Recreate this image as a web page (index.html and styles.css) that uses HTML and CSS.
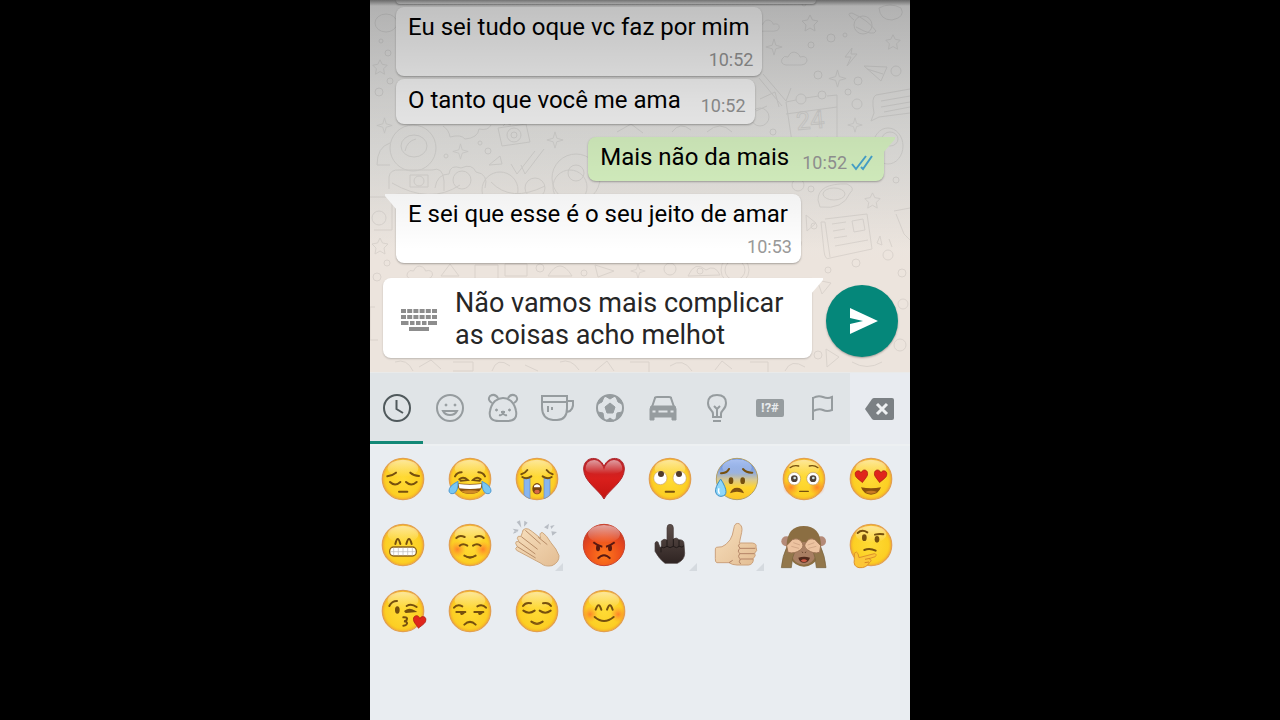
FILE: index.html
```html
<!DOCTYPE html>
<html lang="pt-BR">
<head>
<meta charset="utf-8">
<meta name="viewport" content="width=device-width, initial-scale=1">
<title>Conversa</title>
<link rel="stylesheet" href="styles.css">
</head>
<body>
<svg class="defs" width="0" height="0" aria-hidden="true">
  <defs>
    <radialGradient id="gold" cx="50%" cy="50%" r="54%">
      <stop offset="0" stop-color="#ffdb35"/><stop offset=".78" stop-color="#fccf24"/><stop offset="1" stop-color="#f0a12b"/>
    </radialGradient>
    <linearGradient id="shine" x1="0" y1="0" x2="0" y2="1">
      <stop offset="0" stop-color="#fff" stop-opacity=".55"/><stop offset="1" stop-color="#fff" stop-opacity="0"/>
    </linearGradient>
    <linearGradient id="red" x1="0" y1="0" x2="0" y2="1">
      <stop offset="0" stop-color="#b8262c"/><stop offset=".5" stop-color="#d91f1c"/><stop offset="1" stop-color="#c31410"/>
    </linearGradient>
    <radialGradient id="anger" cx="50%" cy="75%" r="75%">
      <stop offset="0" stop-color="#ff7a1c"/><stop offset=".6" stop-color="#ea4a1c"/><stop offset="1" stop-color="#c0352a"/>
    </radialGradient>
    <linearGradient id="cold" x1="0" y1="0" x2="0" y2="1">
      <stop offset="0" stop-color="#3f74e0"/><stop offset=".35" stop-color="#92acdc"/><stop offset=".52" stop-color="#d8c890"/><stop offset=".7" stop-color="#ffd530"/><stop offset="1" stop-color="#fcc425"/>
    </linearGradient>
    <radialGradient id="blush"><stop offset="0" stop-color="#ff6a2a" stop-opacity=".75"/><stop offset="1" stop-color="#ff8a2a" stop-opacity="0"/></radialGradient>
    <linearGradient id="skin" x1="0" y1="0" x2="1" y2="1">
      <stop offset="0" stop-color="#f7dfbd"/><stop offset="1" stop-color="#e3bd93"/>
    </linearGradient>
    <linearGradient id="dark" x1="0" y1="0" x2="0" y2="1">
      <stop offset="0" stop-color="#5d4f4b"/><stop offset="1" stop-color="#2f2422"/>
    </linearGradient>
    <symbol id="face" viewBox="0 0 132 132">
      <circle cx="66" cy="66" r="62" fill="url(#gold)" stroke="#e2a050" stroke-width="4"/>
      <ellipse cx="66" cy="34" rx="46" ry="26" fill="url(#shine)"/>
    </symbol>
    <symbol id="heart" viewBox="0 0 40 40"><path d="M20 38C12 28 1 22 2 11C4 1 16 0 20 10C24 0 36 1 38 11C39 22 28 28 20 38Z" fill="#e0261c" stroke="#a81c12" stroke-width="2"/></symbol>
    <symbol id="sparkle" viewBox="0 0 20 20"><path d="M10 1L12 8L19 10L12 12L10 19L8 12L1 10L8 8Z"/></symbol>
    <symbol id="star" viewBox="0 0 20 20"><path d="M10 2L12.500 7L18 8L14 12L15 18L10 15L5 18L6 12L2 8L7.500 7Z"/></symbol>
    <symbol id="cloud" viewBox="0 0 30 20"><path d="M7 16Q1 15 3 10Q5 6 9 8Q12 1 18 4Q21 6 21 8Q28 6 28 12Q27 16 22 16Z"/></symbol>
  </defs>
</svg>

<main class="phone">
  <section class="chat" aria-label="Mensagens">
    <svg class="wallpaper" viewBox="0 0 540 372" preserveAspectRatio="xMidYMin slice" aria-hidden="true">
      <g>
        <ellipse cx="16" cy="23" rx="11" ry="9"/><circle cx="18" cy="53" r="3"/><circle cx="9" cy="92" r="4"/><circle cx="20" cy="81" r="3"/><circle cx="11" cy="41" r="2"/>
        <use href="#star" x="1" y="58" width="18" height="18"/><use href="#sparkle" x="6" y="117" width="17" height="17"/>
        <circle cx="43" cy="148" r="23"/><ellipse cx="44" cy="146" rx="13" ry="11"/><path d="M35 151Q37 141 46 139M20 143Q7 147 7 165H20M19 189V177Q20 169 30 170H62Q73 166 74 181V191M40 175h18v12h-18z"/><circle cx="49" cy="181" r="5"/>
        <path d="M73 126Q79 130 80 137Q91 134 95 139Q108 138 109 129Q118 131 121 125"/>
        <use href="#sparkle" x="82" y="143" width="17" height="17"/><use href="#sparkle" x="176" y="131" width="18" height="18"/>
        <path d="M128 128L156 124L160 142L132 146ZM133 126L136 123L141 125M119 165L130 156L132 164Z M141 164L147 174L165 151M151 165L155 174L174 149"/>
        <circle cx="144" cy="135" r="7"/><circle cx="144" cy="135" r="3"/><circle cx="118" cy="151" r="3"/><circle cx="76" cy="156" r="2"/><circle cx="110" cy="143" r="2"/><circle cx="206" cy="178" r="24"/><circle cx="206" cy="173" r="8"/><circle cx="200" cy="187" r="17"/>
        <path d="M65 188Q67 174 79 174Q80 164 91 168Q102 163 106 172Q119 174 115 188"/><circle cx="92" cy="180" r="9"/><circle cx="130" cy="190" r="18"/><circle cx="165" cy="188" r="10"/>
        <path d="M0 197H22V230H4M22 183Q60 205 90 185M121 182Q141 203 175 186"/>
        <circle cx="9" cy="218" r="7"/><use href="#star" x="0" y="236" width="20" height="20"/><circle cx="7" cy="277" r="4"/><circle cx="17" cy="263" r="3"/>
        <use href="#cloud" x="32" y="263" width="35" height="20"/><path d="M71 276L80 264L89 276ZM105 265H128V279H105ZM135 264h22v12h-22zM178 276Q190 256 202 276ZM225 265L244 271L228 277Z"/>
        <circle cx="170" cy="268" r="4"/><circle cx="214" cy="273" r="3"/><use href="#sparkle" x="260" y="263" width="16" height="16"/><circle cx="300" cy="269" r="6"/><path d="M318 276Q325 260 336 270Q345 264 350 275Z"/>
        <circle cx="365" cy="270" r="14"/><circle cx="365" cy="270" r="10"/><circle cx="330" cy="271" r="3"/>
        <path d="M5 307H0V340H8M25 362Q37 358 43 371M49 367L61 360L71 369M83 362h20v9h-20M122 371Q127 356 140 366M155 365L168 371M190 362Q201 358 209 370M225 371l12-10 7 10M260 362h19v10M300 366q13-9 22 5M345 370l7-9 10 8M380 362h18v10M415 371q6-13 20-4"/>
        <use href="#cloud" x="385" y="17" width="26" height="18"/><use href="#sparkle" x="395" y="38" width="18" height="18"/><use href="#star" x="430" y="13" width="20" height="20"/>
        <ellipse cx="493" cy="25" rx="9" ry="9"/><path d="M484 20Q475 13 482 13Q498 20 506 31Q504 37 486 27M509 8Q520 2 531 8Q536 17 522 20Q510 20 509 8"/>
        <circle cx="461" cy="38" r="4"/><circle cx="441" cy="45" r="3"/><circle cx="475" cy="35" r="2"/><circle cx="434" cy="4" r="2"/>
        <use href="#cloud" x="408" y="49" width="32" height="20"/><use href="#star" x="514" y="33" width="18" height="18"/><use href="#sparkle" x="458" y="69" width="19" height="19"/>
        <path d="M482 48L475 57L481 57L477 66L487 54L481 54ZM494 66L517 67L511 81ZM497 69L513 74"/>
        <circle cx="526" cy="71" r="5"/><circle cx="488" cy="81" r="4"/><circle cx="448" cy="75" r="4"/><circle cx="431" cy="99" r="5"/><circle cx="487" cy="104" r="5"/><circle cx="478" cy="92" r="3"/>
        <path d="M389 78L412 106M393 74L416 101M390 99L405 92L409 107M416 101L421 88M397 106L386 111"/>
        <path d="M416 102L426 100M435 98L449 96M457 96L467 95L467 137M416 102L422 142L448 137M416 114L467 107"/><circle cx="452" cy="95" r="4"/>
        <text x="427" y="130" font-size="25" transform="rotate(-5 427 130)">24</text>
        <path d="M540 89L506 95Q501 97 504 113L501 121L509 117L540 113M511 101L540 96M511 107L540 102M514 112L540 107"/>
        <use href="#sparkle" x="477" y="117" width="16" height="16"/><circle cx="456" cy="145" r="4"/><circle cx="403" cy="132" r="3"/><ellipse cx="518" cy="146" rx="15" ry="18"/><ellipse cx="520" cy="139" rx="8" ry="7"/><circle cx="390" cy="117" r="9"/>
        <path d="M302 132Q310 121 321 130M337 132Q350 120 362 132M247 132l14-8 12 9"/>
        <circle cx="526" cy="180" r="3"/><path d="M448 200Q448 183 477 184Q486 188 480 193Q473 210 450 207Z"/><ellipse cx="464" cy="194" rx="11" ry="6"/><circle cx="428" cy="185" r="6"/><circle cx="441" cy="189" r="3"/>
        <use href="#star" x="493" y="191" width="19" height="19"/><path d="M455 219L497 214L502 249L460 258Q455 261 454 251L451 222L455 222L460 257M462 224L476 222M463 231L475 229M464 238L477 236M465 246L498 240M482 221L493 219L495 230L484 232Z"/>
        <path d="M524 211L540 208M526 214L534 234L540 240M507 243L510 236L512 245ZM519 239L522 247M436 215l10 8-9 8zM415 239q9-9 15 0q5 9-8 12z"/>
        <circle cx="444" cy="226" r="3"/><circle cx="486" cy="263" r="4"/><circle cx="458" cy="270" r="3"/><circle cx="518" cy="255" r="5"/><circle cx="532" cy="273" r="4"/><circle cx="530" cy="345" r="6"/><circle cx="448" cy="355" r="4"/><circle cx="533" cy="304" r="5"/>
        <path d="M456 349l13 8-12 10zM482 362q15 9 30 0M447 280l14 3-9 11z"/>
      </g>
    </svg>

    <div class="thread">
      <div class="bubble cut"></div>
      <article class="bubble"><p>Eu sei tudo oque vc faz por mim</p><time>10:52</time></article>
      <article class="bubble inline"><p>O tanto que você me ama</p><time>10:52</time></article>
      <article class="bubble inline sent"><p>Mais não da mais</p>
        <span class="meta"><time>10:52</time>
          <svg width="22" height="16" viewBox="0 0 22 16" role="img" aria-label="Lida"><path d="M1 9L5 14L15 1M10 12L12 14L21 1" fill="none" stroke="#4aa9d4" stroke-width="2"/></svg>
        </span>
      </article>
      <article class="bubble received"><p>E sei que esse é o seu jeito de amar</p><time>10:53</time></article>
    </div>

    <form class="composer">
      <div class="entry">
        <button type="button" class="keys" aria-label="Teclado">
          <svg width="36" height="24" viewBox="0 0 36 24" fill="none" stroke="#8d8d8d" stroke-width="4">
            <path d="M0 3H36" stroke-dasharray="5 1.200"/><path d="M0 9H36" stroke-dasharray="5 1.200"/><path d="M0 15H7.500M9 15H13.500M15 15H19.500M21 15H25.500M27 15H36M8 21H28"/>
          </svg>
        </button>
        <textarea rows="2" aria-label="Mensagem" spellcheck="false">Não vamos mais complicar as coisas acho melhot</textarea>
      </div>
      <button type="button" class="send" aria-label="Enviar">
        <svg width="28" height="28" viewBox="0 0 28 28" fill="#fff"><path d="M0 1L28 14L0 27V17L13 14L0 11Z"/></svg>
      </button>
    </form>
  </section>

  <section class="picker" aria-label="Emojis">
    <nav class="tabs">
      <button type="button" class="tab active" aria-label="Recentes"><svg viewBox="0 0 32 32"><circle cx="16" cy="16" r="13"/><path d="M15.500 8V17L22 21"/></svg></button>
      <button type="button" class="tab" aria-label="Rostos"><svg viewBox="0 0 32 32"><circle cx="16" cy="16" r="13"/><circle class="solid" cx="12" cy="13" r="1"/><circle class="solid" cx="21" cy="13" r="1"/><path d="M9 19H23Q21 23 16 23Q11 23 9 19Z"/></svg></button>
      <button type="button" class="tab" aria-label="Animais"><svg viewBox="0 0 32 32"><path d="M8 9Q16 3 24 9Q28 13 29 19Q31 29 20 29H12Q1 29 3 19Q4 13 8 9ZM5 11Q0 8 3 4Q8 1 11 6M27 11Q32 8 29 4Q24 1 21 6M12 23Q15 24 16 21Q17 24 20 23M14 20H18"/><circle class="solid" cx="9.500" cy="18" r="1"/><circle class="solid" cx="22.500" cy="18" r="1"/></svg></button>
      <button type="button" class="tab" aria-label="Comida"><svg viewBox="0 0 32 32"><path d="M1 4H26V16Q26 28 16 28H12Q1 27 1 15ZM1 10H26M26 9H32Q33 19 26 20M7 14V20M11 15V18"/></svg></button>
      <button type="button" class="tab" aria-label="Esportes"><svg viewBox="0 0 32 32"><circle cx="16" cy="16" r="13"/><path class="solid" d="M16 11L21 15L19 21H13L11 15ZM11 4L16 7L21 4ZM4 12L8 10L10 5L5 8ZM28 12L24 10L22 5L27 8ZM4 20L9 21L10 27L6 25ZM28 20L23 21L22 27L26 25ZM12 29L16 26L20 29Z"/></svg></button>
      <button type="button" class="tab" aria-label="Transporte"><svg viewBox="0 0 32 32"><path d="M5 15L8 6Q8 5 10 5H22Q24 5 24 6L27 15"/><path class="solid" fill-rule="evenodd" d="M4 14H28L29 17V28H25V25H7V28H3V17ZM5 18V21H9V18ZM11 18V21H21V18ZM23 18V21H27V18Z"/></svg></button>
      <button type="button" class="tab" aria-label="Objetos"><svg viewBox="0 0 32 32"><path d="M12 25V22Q12 20 10 18Q7 15 7 11Q7 3 16 3Q25 3 25 11Q25 15 22 18Q20 20 20 22V25ZM13 14L16 17L19 14M16 17V24M12 29H20"/></svg></button>
      <button type="button" class="tab" aria-label="Símbolos"><span class="symbols">!?#</span></button>
      <button type="button" class="tab" aria-label="Bandeiras"><svg viewBox="0 0 32 32"><path d="M6 28V5M6 6Q11 3 16 5T25 5V18Q20 20 16 18T6 19"/></svg></button>
      <button type="button" class="erase" aria-label="Apagar"><svg width="30" height="24" viewBox="0 0 30 24"><path d="M9 1H27Q29 1 29 3V21Q29 23 27 23H9Q8 23 7 22L0 12L7 2Q8 1 9 1Z" fill="#7b8084"/><path d="M12 7L22 17M22 7L12 17" stroke="#eef0f2" stroke-width="3"/></svg></button>
    </nav>

    <div class="grid">
      <button type="button" aria-label="Pensativo triste"><svg viewBox="0 0 132 132"><use href="#face"/><g class="ink"><path d="M19 58Q34 56 45 47M88 47Q98 56 114 57M27 75Q42 90 58 75M75 75Q90 90 107 75M54 104H79"/></g></svg></button>
      <button type="button" aria-label="Chorando de rir"><svg viewBox="0 0 132 132"><use href="#face"/><path d="M28 79Q66 83 104 79Q102 111 66 111Q30 111 28 79Z" fill="#8b5210"/><path d="M32 81Q66 86 100 81L98 94Q66 98 34 94Z" fill="#fff"/><path d="M38 103Q66 97 95 103Q66 118 38 103" fill="#d28c26"/><g class="ink"><path d="M21 58Q27 46 41 46M91 46Q105 46 111 58M34 67Q46 57 59 69L38 71M98 67Q86 57 75 69L95 71"/></g><path d="M30 73Q2 87 3 102Q5 113 18 109Q31 103 30 73ZM102 73Q130 87 129 102Q127 113 114 109Q101 103 102 73Z" fill="#79c7f2" stroke="#4e99d2" stroke-width="3"/></svg></button>
      <button type="button" aria-label="Chorando alto"><svg viewBox="0 0 132 132"><use href="#face"/><path d="M27 63H45V125Q34 121 27 114ZM87 63H105V114Q98 121 87 125Z" fill="#87b5ee" stroke="#6d8fbd" stroke-width="2"/><g class="ink"><path d="M19 52Q30 49 37 39M95 39Q102 49 113 52M22 60Q34 68 49 58M83 58Q98 68 110 60"/></g><ellipse cx="66" cy="95" rx="14" ry="17" fill="#77430e"/><path d="M57 86Q66 77 75 86V91H57Z" fill="#fff"/><ellipse cx="66" cy="104" rx="8" ry="6" fill="#d76745"/></svg></button>
      <button type="button" aria-label="Coração"><svg viewBox="0 0 132 132"><path d="M66 126C51 98 5 74 5 36C5-4 55-6 66 29C77-6 127-4 127 36C127 74 81 98 66 126Z" fill="url(#red)" stroke="#ad262b" stroke-width="3"/><path d="M11 39Q10 9 37 9Q58 10 66 39Q74 10 96 9Q121 10 121 39Q113 54 66 51Q19 54 11 39Z" fill="url(#shine)"/></svg></button>
      <button type="button" aria-label="Revirando os olhos"><svg viewBox="0 0 132 132"><use href="#face"/><circle cx="37" cy="63" r="20" fill="#fff" stroke="#c9a268" stroke-width="2"/><circle cx="95" cy="63" r="20" fill="#fff" stroke="#c9a268" stroke-width="2"/><circle cx="39" cy="51" r="9" fill="#513b2a"/><circle cx="93" cy="51" r="9" fill="#513b2a"/><g class="ink"><path d="M53 104H78"/></g></svg></button>
      <button type="button" aria-label="Suor frio"><svg viewBox="0 0 132 132"><circle cx="66" cy="66" r="62" fill="url(#cold)" stroke="#b3a068" stroke-width="3"/><ellipse cx="66" cy="31" rx="44" ry="24" fill="url(#shine)"/><g class="ink"><path d="M18 49Q35 49 42 36M84 36Q94 48 112 47"/></g><ellipse cx="48" cy="71" rx="7" ry="10" fill="#76500e"/><ellipse cx="83" cy="71" rx="7" ry="10" fill="#76500e"/><path d="M45 109Q50 92 66 92Q82 92 87 109Q66 100 45 109" fill="#80520f"/><path d="M17 66Q-1 92 2 105Q6 118 18 118Q33 117 33 104Q33 91 17 66Z" fill="#8ed7fa" stroke="#3c8fc7" stroke-width="3"/><path d="M12 94Q8 105 14 110" stroke="#fff" stroke-width="4" fill="none"/></svg></button>
      <button type="button" aria-label="Corado"><svg viewBox="0 0 132 132"><use href="#face"/><circle cx="27" cy="91" r="25" fill="url(#blush)"/><circle cx="105" cy="91" r="25" fill="url(#blush)"/><g class="ink thin"><path d="M24 32Q36 23 50 27M82 27Q96 23 108 32M53 103H79"/></g><g fill="#fff" stroke="#b9985e" stroke-width="2"><circle cx="37" cy="65" r="19"/><circle cx="93" cy="65" r="19"/></g><circle cx="37" cy="65" r="10" fill="#4d4036"/><circle cx="93" cy="65" r="10" fill="#4d4036"/><circle cx="38" cy="63" r="4" fill="#cde2e6"/><circle cx="94" cy="63" r="4" fill="#cde2e6"/></svg></button>
      <button type="button" aria-label="Apaixonado"><svg viewBox="0 0 132 132"><use href="#face"/><use href="#heart" x="17" y="37" width="42" height="42" transform="rotate(-7 38 58)"/><use href="#heart" x="73" y="37" width="42" height="42" transform="rotate(7 94 58)"/><path d="M36 91Q66 97 96 91Q88 113 66 113Q44 113 36 91Z" fill="#89500d"/><path d="M48 105Q66 98 85 105Q66 116 48 105" fill="#c87a22"/></svg></button>

      <button type="button" aria-label="Sorriso largo"><svg viewBox="0 0 132 132"><use href="#face"/><g class="ink"><path d="M43 63Q50 33 58 63M76 63Q84 33 92 63"/></g><rect x="26" y="72" width="80" height="27" rx="12" fill="#fff" stroke="#8f6518" stroke-width="4"/><path d="M28 86H104M38 74V97M52 74V97M66 74V97M80 74V97M94 74V97" stroke="#bbb" stroke-width="2"/></svg></button>
      <button type="button" aria-label="Relaxado"><svg viewBox="0 0 132 132"><use href="#face"/><circle cx="28" cy="79" r="25" fill="url(#blush)"/><circle cx="105" cy="79" r="25" fill="url(#blush)"/><g class="ink"><path d="M25 45Q35 35 50 42M82 42Q97 35 107 45M35 68Q45 59 58 68M75 68Q87 59 98 68M49 98Q66 108 83 98"/></g><path d="M50 99Q66 106 82 99Q66 115 50 99" fill="#76500e"/></svg></button>
      <button type="button" class="more" aria-label="Palmas"><svg viewBox="0 0 132 132"><path d="M-7 17L11 20L5 29ZM5-3L19 14L15-8ZM28-7L27 11L38-1ZM-6 32L8 27L-2 25ZM87 13L102 2L99 19ZM109 25L126 27L112 38ZM106 9L119 6L109 18Z" fill="#b8bdc4"/><path d="M31 17Q39 15 52 26L77 46Q71 27 83 29Q94 36 107 58Q125 78 132 98Q133 118 111 128Q90 132 78 121L5 82Q-2 76 7 71L2 61Q1 53 12 56L7 46Q7 37 18 40L22 29Q22 19 31 17Z" fill="url(#skin)" stroke="#cda77e" stroke-width="3"/><path d="M31 22L77 63M19 41L68 79M12 57L61 93M7 71L62 105M70 43L97 65" fill="none" stroke="#b88d68" stroke-width="3"/></svg></button>
      <button type="button" aria-label="Furioso"><svg viewBox="0 0 132 132"><circle cx="66" cy="66" r="62" fill="url(#anger)" stroke="#c9442f" stroke-width="3"/><ellipse cx="66" cy="33" rx="48" ry="27" fill="url(#shine)"/><path d="M34 58Q48 69 61 71M98 58Q84 69 72 71M47 107Q66 86 85 107" stroke="#591912" stroke-width="6" fill="none"/><ellipse cx="48" cy="75" rx="6" ry="10" fill="#5b190d"/><ellipse cx="84" cy="75" rx="6" ry="10" fill="#5b190d"/></svg></button>
      <button type="button" class="more" aria-label="Dedo do meio"><svg viewBox="0 0 132 132"><path d="M57 51V15Q57 4 66 4Q76 4 76 15V48Q85 41 93 50Q108 50 108 62L110 91Q110 111 88 121H51Q34 109 21 85V60Q24 53 30 57L36 73L40 72V54Q48 45 57 51Z" fill="url(#dark)" stroke="#463b39" stroke-width="2"/><path d="M57 51V71M76 48V71M93 51V72M40 72Q46 78 57 70Q66 78 76 70Q85 78 94 70Q103 76 108 68M39 73V88" stroke="#211a19" stroke-width="3" fill="none"/></svg></button>
      <button type="button" class="more" aria-label="Positivo"><svg viewBox="0 0 132 132"><path d="M4 73Q23 74 33 64Q48 51 52 36L58 10Q61-1 72 2Q84 9 80 28L73 60H112Q126 62 123 72Q129 84 119 90Q124 99 115 106Q116 124 101 126H66Q52 126 42 119H6Q0 118 1 107V81Q1 74 4 73Z" fill="url(#skin)" stroke="#cca27d" stroke-width="3"/><path d="M74 76H121M75 92H118M76 108H114M74 62Q66 68 75 76Q65 85 75 92Q66 101 76 108Q69 117 77 123M42 119L53 112" fill="none" stroke="#b48466" stroke-width="3"/></svg></button>
      <button type="button" aria-label="Macaco que não vê"><svg viewBox="0 0 132 132"><circle cx="13" cy="55" r="15" fill="#b48a78"/><circle cx="117" cy="55" r="15" fill="#b48a78"/><path d="M14 66Q16 9 65 9Q115 9 117 67L107 105Q93 130 66 131Q39 131 25 105Z" fill="#8b6e42"/><ellipse cx="65" cy="91" rx="36" ry="34" fill="#a97f63"/><path d="M17 66L41 79L32 104L28 134H-2Q0 101 17 66ZM114 66L91 79L99 104L103 134H132Q130 101 114 66Z" fill="#92774b" stroke="#75603c" stroke-width="2"/><path d="M14 68L31 50Q49 43 58 56Q69 69 56 80Q38 94 18 88ZM116 68L99 50Q81 43 74 56Q61 69 76 80Q94 94 113 88Z" fill="#edc3a0" stroke="#9c7355" stroke-width="3"/><path d="M34 59L54 66M28 70L51 76M97 59L77 66M103 70L79 76" stroke="#c59a7b" stroke-width="2"/><path d="M49 104Q66 99 84 104Q79 119 66 119Q53 119 49 104Z" fill="#50291b"/><path d="M56 113Q66 105 76 113Q66 121 56 113" fill="#ce5a45"/><path d="M60 86L63 90M72 86L69 90" stroke="#67462f" stroke-width="3"/></svg></button>
      <button type="button" aria-label="Pensando"><svg viewBox="0 0 132 132"><use href="#face"/><g class="ink"><path d="M26 30Q39 18 55 28M78 35Q91 31 103 34M46 81Q62 74 80 83"/></g><ellipse cx="46" cy="44" rx="7" ry="10" fill="#76500e"/><ellipse cx="84" cy="49" rx="7" ry="10" fill="#76500e"/><path d="M16 91Q23 83 27 92L30 104L76 92Q85 93 79 101L60 107Q72 111 61 119Q52 136 30 134Q12 131 16 109Z" fill="#fcc638" stroke="#dd922b" stroke-width="3"/><path d="M48 109L63 106M47 119L60 117" stroke="#d78725" stroke-width="3"/></svg></button>

      <button type="button" aria-label="Mandando beijo"><svg viewBox="0 0 132 132"><use href="#face"/><g class="ink"><path d="M25 51Q32 36 48 36M77 51Q91 42 107 54M73 67Q85 57 100 67L75 69M67 85Q82 84 77 93Q75 97 69 97Q83 99 76 107Q73 110 67 110"/></g><ellipse cx="49" cy="63" rx="7" ry="11" fill="#76500e"/><use href="#heart" x="94" y="78" width="42" height="42" transform="rotate(8 115 99)"/></svg></button>
      <button type="button" aria-label="Desinteressado"><svg viewBox="0 0 132 132"><use href="#face"/><g class="ink"><path d="M18 56Q28 44 43 52M88 52Q103 44 114 56M25 69H52M79 69H106M49 107Q66 90 83 107"/></g><path d="M35 69H52Q48 80 38 77ZM89 69H106Q102 80 92 77Z" fill="#76500e"/></svg></button>
      <button type="button" aria-label="Aliviado"><svg viewBox="0 0 132 132"><use href="#face"/><g class="ink"><path d="M24 51Q32 39 48 43M84 43Q100 39 108 51M25 65Q42 77 59 65M74 65Q91 77 107 65M49 98Q66 110 83 98"/></g><path d="M50 99Q66 107 82 99Q66 117 50 99" fill="#8b5d12"/></svg></button>
      <button type="button" aria-label="Sorrindo"><svg viewBox="0 0 132 132"><use href="#face"/><circle cx="24" cy="76" r="24" fill="url(#blush)"/><circle cx="109" cy="76" r="24" fill="url(#blush)"/><g class="ink"><path d="M41 62Q50 35 58 62M75 62Q84 35 92 62M38 84Q66 108 95 84"/></g></svg></button>
    </div>
  </section>
</main>
</body>
</html>
```
FILE: styles.css
```css
* { box-sizing: border-box; }

body {
  margin: 0;
  background: #000;
  font-family: Roboto, "Noto Sans", sans-serif;
  color: #000;
}

button {
  margin: 0;
  padding: 0;
  border: 0;
  background: none;
  font: inherit;
  cursor: pointer;
}

svg { display: block; overflow: visible; }
.defs { position: absolute; }

.phone {
  display: flex;
  flex-direction: column;
  max-width: 540px;
  min-height: 100vh;
  margin: 0 auto;
  background: #e9edf1;
}

/* Conversation */
.chat {
  position: relative;
  overflow: hidden;
  background: linear-gradient(#ebebeb, #e9e8e5 150px, #ece4dd 260px);
}

.chat::after {
  content: "";
  position: absolute;
  inset: 0;
  background:
    linear-gradient(rgba(0, 0, 0, .4), transparent 6px),
    linear-gradient(rgba(0, 0, 0, .25), rgba(0, 0, 0, .13) 100px, rgba(0, 0, 0, .05) 195px, transparent 250px);
  pointer-events: none;
}

.wallpaper {
  position: absolute;
  inset: 0;
  width: 100%;
  height: 100%;
  fill: none;
  stroke: #000;
  stroke-width: 1;
  opacity: .07;
}

.thread {
  position: relative;
  display: flex;
  flex-direction: column;
  align-items: flex-start;
  gap: 3px;
  padding: 0 26px;
}

.bubble {
  position: relative;
  display: flex;
  flex-direction: column;
  gap: 5px;
  padding: 4px 9px 4px 12px;
  border-radius: 8px;
  background: #fff;
  box-shadow: 0 1px 2px rgba(0, 0, 0, .3);
}

.bubble p {
  margin: 0;
  padding-right: 4px;
  font-size: 24px;
  line-height: 32px;
}

.bubble time {
  align-self: flex-end;
  font-size: 18px;
  line-height: 24px;
  color: #999;
}

.cut {
  width: 86%;
  height: 4px;
  padding: 0;
  border-radius: 0 0 8px 8px;
}

.inline {
  flex-direction: row;
  gap: 16px;
  padding-bottom: 8px;
  padding-top: 5px;
}

.inline time { line-height: 20px; }

.sent {
  align-self: flex-end;
  gap: 9px;
  margin-top: 10px;
  padding-top: 4px;
  padding-right: 11px;
  background: #dcf8c6;
}

.meta {
  display: flex;
  align-items: center;
  align-self: flex-end;
  gap: 4px;
}

.received {
  margin-top: 10px;
  border-top-left-radius: 0;
}

.sent, .entry { border-top-right-radius: 0; }

.sent::after,
.received::before,
.entry::after {
  content: "";
  position: absolute;
  top: 0;
  width: 12px;
  height: 16px;
  background: inherit;
}

.sent::after, .entry::after { left: calc(100% - 1px); clip-path: polygon(0 0, 100% 0, 100% 2px, 0 100%); }
.received::before { right: calc(100% - 1px); clip-path: polygon(0 0, 100% 0, 100% 100%, 0 2px); }

.composer {
  position: relative;
  z-index: 1;
  display: flex;
  align-items: center;
  gap: 14px;
  padding: 15px 12px 14px 13px;
}

.entry {
  position: relative;
  display: flex;
  flex: 1;
  align-items: center;
  gap: 18px;
  min-width: 0;
  padding: 9px 12px 7px 18px;
  border-radius: 8px;
  border-top-right-radius: 0;
  background: #fff;
  box-shadow: 0 1px 2px rgba(0, 0, 0, .2);
}

.keys { padding-top: 2px; }

.entry textarea {
  flex: 1;
  min-width: 0;
  height: 64px;
  padding: 0;
  border: 0;
  outline: 0;
  overflow: hidden;
  resize: none;
  background: none;
  font: 27px/32px Roboto, "Noto Sans", sans-serif;
  color: #262626;
}

.send {
  display: grid;
  flex: none;
  place-items: center;
  width: 72px;
  height: 72px;
  margin-top: 6px;
  border-radius: 50%;
  background: #05877a;
  box-shadow: 0 1px 2px rgba(0, 0, 0, .3);
}

.send svg { margin-left: 4px; }

/* Emoji picker */
.tabs {
  display: flex;
  height: 74px;
  border-top: 1px solid #e9eaea;
  border-bottom: 2px solid #edf0f2;
  background: #e0e4e7;
}

.tab {
  display: grid;
  flex: 1;
  place-items: center;
  padding-top: 2px;
  border-bottom: 3px solid transparent;
  color: #969c9f;
}

.tab.active {
  border-bottom-color: #128876;
  color: #50595c;
}

.tab svg {
  width: 32px;
  height: 32px;
  fill: none;
  stroke: currentColor;
  stroke-width: 2;
}

.tab .solid { fill: currentColor; stroke-width: 1; }

.symbols {
  width: 28px;
  border-radius: 2px;
  background: #969c9f;
  color: #e8ebed;
  font-size: 13px;
  font-weight: 700;
  line-height: 18px;
}

.erase {
  display: grid;
  flex: none;
  place-items: center;
  width: 60px;
  background: #e8ebf0;
}

.grid {
  display: grid;
  grid-template-columns: repeat(8, 1fr);
  grid-auto-rows: 66px;
  padding-right: 6px;
}

.grid button {
  position: relative;
  display: grid;
  place-items: center;
}

.grid svg { width: 44px; height: 44px; }

.more::after {
  content: "";
  position: absolute;
  right: 7px;
  bottom: 7px;
  border: 4px solid;
  border-color: transparent #d5dadf #d5dadf transparent;
}

.ink {
  fill: none;
  stroke: #76500e;
  stroke-width: 6;
  stroke-linecap: round;
}

.thin { stroke-width: 4; }
```
